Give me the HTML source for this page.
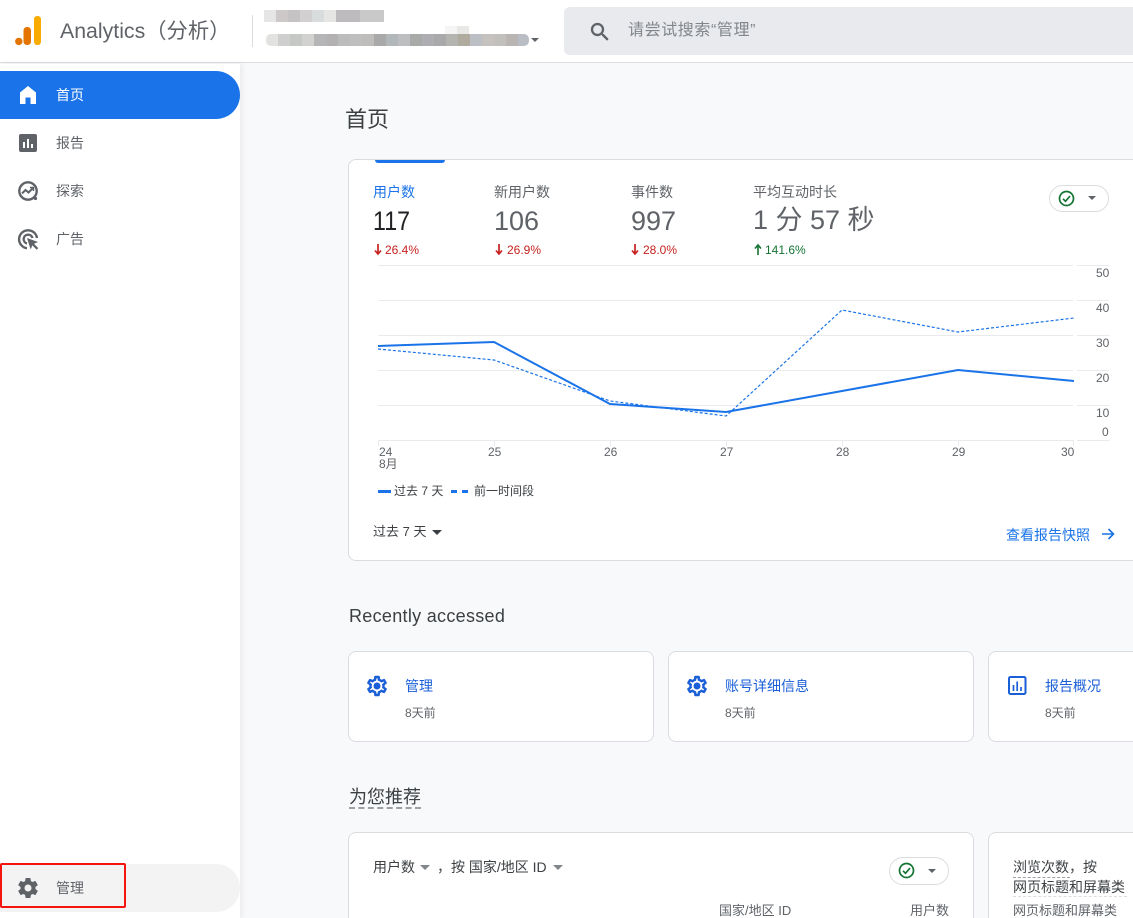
<!DOCTYPE html>
<html lang="zh"><head><meta charset="utf-8"><title>Analytics</title>
<style>
*{box-sizing:border-box}
html,body{margin:0;padding:0;width:1133px;height:918px;overflow:hidden}
body{font-family:"Liberation Sans","Noto Sans CJK SC",sans-serif;color:#5f6368}
#r{position:absolute;left:0;top:0;width:1133px;height:918px;overflow:hidden;background:#f8f9fa}
.a{position:absolute;white-space:nowrap;line-height:1}
.card{position:absolute;background:#fff;border:1px solid #dadce0;border-radius:8px}
.t{font-size:14px}
.red{color:#c5221f;font-size:12px}
.big{font-size:27px;color:#5f6368}
.y{font-size:12px;color:#5f6368;left:1096px}
.x{font-size:12px;color:#5f6368}
.b{position:absolute}
.m{position:absolute;display:flex;height:12px}
.m i{display:block;width:12px;height:12px}
</style></head><body><div id="r">
<!-- header -->
<div class="a" style="left:0;top:0;width:1133px;height:63px;background:#fff;border-bottom:1px solid #dadce0"></div>
<svg class="b" style="left:14px;top:15px" width="28" height="32" viewBox="0 0 28 32">
<rect x="20" y="1" width="7" height="29" rx="3.2" fill="#f9ab00"/>
<rect x="9.500" y="12" width="7.500" height="18" rx="3.400" fill="#e37400"/>
<circle cx="4.800" cy="26.400" r="3.700" fill="#e37400"/>
</svg>
<div class="a" style="left:60px;top:21px;font-size:21.300px;color:#5f6368">Analytics（分析）</div>
<div class="b" style="left:252px;top:15px;width:1px;height:32px;background:#dadce0"></div>
<!-- blurred account -->
<div class="m" style="left:264px;top:10px"><i style="background:#e6e6e6"></i><i style="background:#cdc9c9"></i><i style="background:#c6c3c5"></i><i style="background:#d2d0d0"></i><i style="background:#d8dcdc"></i><i style="background:#e6e6e4"></i><i style="background:#bdbbbe"></i><i style="background:#bdbbbe"></i><i style="background:#c9c9c9"></i><i style="background:#c9c9c9"></i></div>
<div class="b" style="left:445px;top:26px;width:12px;height:8px;background:#f5f5f5"></div>
<div class="b" style="left:457px;top:26px;width:12px;height:8px;background:#e8e8e6"></div>
<div class="m" style="left:266px;top:34px;border-radius:5px;overflow:hidden"><i style="background:#e2e2e0"></i><i style="background:#cfcfcf"></i><i style="background:#c6c8c6"></i><i style="background:#d2d2d0"></i><i style="background:#b5b5b8"></i><i style="background:#b3b1b1"></i><i style="background:#bdbcbc"></i><i style="background:#c0bfbf"></i><i style="background:#bebdbb"></i><i style="background:#a9a9a9"></i><i style="background:#b2b7ba"></i><i style="background:#bcbec0"></i><i style="background:#a8aaa8"></i><i style="background:#aeaeb2"></i><i style="background:#a9a9ab"></i><i style="background:#b4b4b0"></i><i style="background:#b0ab9f"></i><i style="background:#bcbfc4"></i><i style="background:#c5c2bf"></i><i style="background:#c2c0bc"></i><i style="background:#b8b5b2"></i><i style="background:#b9bec4;width:11px"></i></div>
<div class="b" style="left:531px;top:38px;width:0;height:0;border-left:4.500px solid transparent;border-right:4.500px solid transparent;border-top:4.500px solid #5f6368"></div>
<div class="b" style="left:564px;top:7px;width:580px;height:48px;background:#e8eaed;border-radius:6px"></div>
<svg class="b" style="left:588px;top:20px" width="24" height="24" viewBox="0 0 24 24"><path fill="#5f6368" stroke="#5f6368" stroke-width=".4" d="M15.500 14h-.790l-.280-.270A6.470 6.470 0 0 0 16 9.500 6.500 6.500 0 1 0 9.500 16c1.610 0 3.090-.590 4.230-1.570l.270.280v.790l5 4.990L20.490 19l-4.990-5zm-6 0C7.010 14 5 11.990 5 9.500S7.010 5 9.500 5 14 7.010 14 9.500 11.990 14 9.500 14z"/></svg>
<div class="a" style="left:628px;top:23px;font-size:16px;letter-spacing:.6px;color:#80868b">请尝试搜索“管理”</div>

<!-- sidebar -->
<div class="b" style="left:0;top:64px;width:240px;height:854px;background:#fff;box-shadow:2px 0 5px rgba(60,64,67,.08)"></div>
<div class="b" style="left:0;top:71px;width:240px;height:48px;background:#1a73e8;border-radius:0 24px 24px 0"></div>
<svg class="b" style="left:18px;top:85px" width="20" height="20" viewBox="0 0 20 20"><path fill="#fff" d="M10 1 2 7.500V19h5.500v-6.500h5V19H18V7.500z"/></svg>
<div class="a" style="left:56px;top:88px;font-size:14px;color:#fff">首页</div>
<svg class="b" style="left:18px;top:133px" width="20" height="20" viewBox="0 0 20 20"><rect x="1" y="1" width="18" height="18" rx="2" fill="#5f6368"/><path fill="#fff" d="M5 9h2v6H5zM9 6h2v9H9zM13 11h2v4h-2z"/></svg>
<div class="a" style="left:56px;top:136px;font-size:14px;color:#5f6368">报告</div>
<svg class="b" style="left:17px;top:180px" width="22" height="22" viewBox="0 0 22 22" fill="none" stroke="#5f6368"><circle cx="11" cy="11" r="8.700" stroke-width="2.400"/><path d="M5 13.500 8.500 10l3 2.500L16 8" stroke-width="2"/><path d="M13 7.500h3.500V11" stroke-width="1.400"/><circle cx="18.500" cy="18.500" r="1.600" fill="#5f6368" stroke="none"/></svg>
<div class="a" style="left:56px;top:184px;font-size:14px;color:#5f6368">探索</div>
<svg class="b" style="left:17px;top:228px" width="23" height="23" viewBox="0 0 23 23" fill="none" stroke="#5f6368"><path d="M10 20.200A9 9 0 1 1 20 10" stroke-width="2.400"/><path d="M10 15.500A4.500 4.500 0 1 1 15.500 10" stroke-width="2.400"/><path fill="#5f6368" stroke="none" d="M10 10l11 4-4 1.800 4.300 4.300-1.600 1.600-4.300-4.300-1.800 4z"/></svg>
<div class="a" style="left:56px;top:232px;font-size:14px;color:#5f6368">广告</div>
<div class="b" style="left:0;top:864px;width:240px;height:48px;background:#f3f3f3;border-radius:0 24px 24px 0"></div>
<svg class="b" style="left:16px;top:876px" width="24" height="24" viewBox="0 0 24 24"><path fill="#5f6368" d="M19.430 12.980c.040-.320.070-.640.070-.980s-.030-.660-.070-.980l2.110-1.650c.190-.150.240-.420.120-.640l-2-3.460c-.120-.220-.390-.300-.610-.220l-2.490 1c-.520-.400-1.080-.730-1.690-.980l-.380-2.650A.490.490 0 0 0 14 2h-4c-.250 0-.460.180-.49.420l-.38 2.650c-.610.250-1.170.590-1.690.980l-2.490-1c-.230-.090-.490 0-.610.220l-2 3.460c-.130.220-.070.490.120.640l2.110 1.650c-.040.320-.070.650-.070.980s.030.660.070.980l-2.110 1.650c-.190.150-.240.420-.120.640l2 3.460c.120.220.390.300.610.220l2.490-1c.520.400 1.080.730 1.690.980l.380 2.650c.030.240.240.420.490.420h4c.250 0 .460-.180.490-.420l.380-2.650c.610-.250 1.170-.590 1.690-.980l2.490 1c.230.090.490 0 .610-.220l2-3.460c.120-.220.070-.490-.120-.640l-2.110-1.650zM12 15.500A3.500 3.500 0 1 1 12 8.500a3.500 3.500 0 0 1 0 7z"/></svg>
<div class="a" style="left:56px;top:881px;font-size:14px;color:#5f6368">管理</div>
<div class="b" style="left:0;top:863px;width:126px;height:45px;border:2px solid #f5150f;border-radius:2px"></div>

<!-- main -->
<div class="a" style="left:345px;top:109px;font-size:22px;color:#3c4043">首页</div>
<div class="card" style="left:348px;top:159px;width:800px;height:402px"></div>
<div class="b" style="left:375px;top:160px;width:70px;height:3px;background:#1a73e8;border-radius:0 0 3px 3px"></div>

<div class="a t" style="left:373px;top:185px;color:#1a73e8">用户数</div>
<div class="a t" style="left:494px;top:185px">新用户数</div>
<div class="a t" style="left:631px;top:185px">事件数</div>
<div class="a t" style="left:753px;top:185px">平均互动时长</div>
<div class="a big" style="left:373px;top:208px;color:#202124;transform:scaleX(.86);transform-origin:0 0">117</div>
<div class="a big" style="left:494px;top:208px">106</div>
<div class="a big" style="left:631px;top:208px">997</div>
<div class="a big" style="left:753px;top:207px">1 分 57 秒</div>

<svg class="b" style="left:373px;top:243px" width="10" height="13" viewBox="0 0 10 13"><path d="M5 1v10M2 7.500 5 11l3-3.500" fill="none" stroke="#c5221f" stroke-width="1.700"/></svg>
<div class="a red" style="left:385px;top:244px">26.4%</div>
<svg class="b" style="left:494px;top:243px" width="10" height="13" viewBox="0 0 10 13"><path d="M5 1v10M2 7.500 5 11l3-3.500" fill="none" stroke="#c5221f" stroke-width="1.700"/></svg>
<div class="a red" style="left:507px;top:244px">26.9%</div>
<svg class="b" style="left:630px;top:243px" width="10" height="13" viewBox="0 0 10 13"><path d="M5 1v10M2 7.500 5 11l3-3.500" fill="none" stroke="#c5221f" stroke-width="1.700"/></svg>
<div class="a red" style="left:643px;top:244px">28.0%</div>
<svg class="b" style="left:753px;top:243px" width="10" height="13" viewBox="0 0 10 13"><path d="M5 12V2M2 5.500 5 2l3 3.500" fill="none" stroke="#137333" stroke-width="1.600"/></svg>
<div class="a" style="left:765px;top:244px;font-size:12px;color:#137333">141.6%</div>

<div class="b" style="left:1049px;top:185px;width:60px;height:27px;background:#fff;border:1px solid #dadce0;border-radius:14px"></div>
<svg class="b" style="left:1058px;top:190px" width="17" height="17" viewBox="0 0 17 17" fill="none"><circle cx="8.500" cy="8.500" r="7" stroke="#137333" stroke-width="1.700"/><path d="M5 8.800 7.500 11.300 12 6" stroke="#137333" stroke-width="1.700"/></svg>
<div class="b" style="left:1088px;top:196px;width:0;height:0;border-left:4.500px solid transparent;border-right:4.500px solid transparent;border-top:4.500px solid #5f6368"></div>

<!-- chart -->
<svg class="b" style="left:360px;top:255px" width="773" height="200" viewBox="360 255 773 200" fill="none">
<g stroke="#e8eaed" stroke-width="1">
<path d="M378 265.500H1073M1077 265.500H1109M378 300.500H1073M1077 300.500H1109M378 335.500H1073M1077 335.500H1109M378 370.500H1073M1077 370.500H1109M378 405.500H1073M1077 405.500H1109M378 440.500H1073M1077 440.500H1109"/>
<path d="M378.500 440V446M494.500 440V446M610.500 440V446M726.500 440V446M842.500 440V446M958.500 440V446M1073.500 440V446"/>
</g>
<path d="M378 349 494 360 610 401 726 416 842 310 958 332 1074 318" stroke="#1a73e8" stroke-width="1.200" stroke-dasharray="3 2"/>
<path d="M378 346 494 342 610 404 726 412 842 391 958 370 1074 381" stroke="#1a73e8" stroke-width="2"/>
</svg>
<div class="a y" style="top:267px">50</div>
<div class="a y" style="top:302px">40</div>
<div class="a y" style="top:337px">30</div>
<div class="a y" style="top:372px">20</div>
<div class="a y" style="top:407px">10</div>
<div class="a y" style="top:426px;left:1102px">0</div>
<div class="a x" style="left:379px;top:446px">24</div>
<div class="a x" style="left:379px;top:458px">8月</div>
<div class="a x" style="left:488px;top:446px">25</div>
<div class="a x" style="left:604px;top:446px">26</div>
<div class="a x" style="left:720px;top:446px">27</div>
<div class="a x" style="left:836px;top:446px">28</div>
<div class="a x" style="left:952px;top:446px">29</div>
<div class="a x" style="left:1061px;top:446px">30</div>

<div class="b" style="left:378px;top:490px;width:13px;height:3px;background:#1a73e8"></div>
<div class="a" style="left:394px;top:485px;font-size:12px;color:#3c4043">过去 7 天</div>
<div class="b" style="left:451px;top:490px;width:6px;height:3px;background:#1a73e8"></div>
<div class="b" style="left:462px;top:490px;width:6px;height:3px;background:#1a73e8"></div>
<div class="a" style="left:474px;top:485px;font-size:12px;color:#3c4043">前一时间段</div>

<div class="a" style="left:373px;top:525px;font-size:13px;color:#3c4043">过去 7 天</div>
<div class="b" style="left:432px;top:530px;width:0;height:0;border-left:5px solid transparent;border-right:5px solid transparent;border-top:5px solid #3c4043"></div>
<div class="a t" style="left:1006px;top:528px;color:#1a73e8">查看报告快照</div>
<svg class="b" style="left:1101px;top:527px" width="14" height="14" viewBox="0 0 14 14" fill="none"><path d="M1 7h11M7.500 2 12.500 7 7.500 12" stroke="#1a73e8" stroke-width="1.600"/></svg>

<!-- recently accessed -->
<div class="a" style="left:349px;top:607px;font-size:18px;letter-spacing:.3px;color:#3c4043">Recently accessed</div>
<div class="card" style="left:348px;top:651px;width:306px;height:91px"></div>
<div class="card" style="left:668px;top:651px;width:306px;height:91px"></div>
<div class="card" style="left:988px;top:651px;width:306px;height:91px"></div>
<svg class="b" style="left:365px;top:674px" width="24" height="24" viewBox="0 0 24 24"><path fill="#1a5fd8" stroke="#1a5fd8" stroke-width=".5" d="M19.430 12.980c.040-.320.070-.640.070-.980s-.030-.660-.070-.980l2.110-1.650c.190-.150.240-.420.120-.640l-2-3.460c-.120-.220-.390-.300-.610-.220l-2.490 1c-.520-.400-1.080-.730-1.690-.980l-.380-2.650A.490.490 0 0 0 14 2h-4c-.250 0-.460.180-.49.420l-.38 2.650c-.610.250-1.170.590-1.690.980l-2.490-1c-.230-.090-.490 0-.61.220l-2 3.460c-.130.220-.070.490.12.640l2.110 1.650c-.040.320-.070.650-.070.980s.030.660.070.980l-2.110 1.650c-.190.150-.240.420-.12.640l2 3.460c.12.220.39.300.61.220l2.490-1c.52.40 1.08.73 1.69.98l.38 2.650c.03.24.24.42.49.42h4c.25 0 .46-.18.49-.42l.38-2.650c.61-.25 1.17-.59 1.69-.98l2.49 1c.23.09.49 0 .61-.22l2-3.460c.12-.22.07-.49-.12-.64l-2.110-1.650zm-1.980-1.710c.04.310.05.520.05.730s-.02.430-.05.730l-.14 1.130.89.700 1.080.840-.70 1.210-1.270-.51-1.040-.42-.90.680c-.43.320-.84.560-1.250.730l-1.060.43-.16 1.130-.20 1.350h-1.400l-.19-1.350-.16-1.130-1.060-.43c-.43-.18-.83-.41-1.230-.71l-.91-.70-1.060.43-1.270.51-.70-1.210 1.080-.84.89-.70-.14-1.130c-.03-.31-.05-.54-.05-.74s.02-.43.05-.73l.14-1.130-.89-.70-1.08-.84.70-1.210 1.27.51 1.04.42.90-.68c.43-.32.84-.56 1.25-.73l1.060-.43.16-1.130.20-1.350h1.390l.19 1.350.16 1.130 1.060.43c.43.18.83.41 1.230.71l.91.70 1.060-.43 1.270-.51.70 1.210-1.070.85-.89.70.14 1.130z"/><circle cx="12" cy="12" r="3.500" fill="#1a5fd8"/></svg>
<div class="a t" style="left:405px;top:679px;color:#1a5fd8">管理</div>
<div class="a" style="left:405px;top:707px;font-size:12px;color:#5f6368">8天前</div>
<svg class="b" style="left:685px;top:674px" width="24" height="24" viewBox="0 0 24 24"><path fill="#1a5fd8" stroke="#1a5fd8" stroke-width=".5" d="M19.430 12.980c.040-.320.070-.640.070-.980s-.030-.660-.070-.980l2.110-1.650c.190-.150.240-.420.120-.640l-2-3.460c-.120-.220-.390-.300-.610-.220l-2.490 1c-.520-.400-1.080-.730-1.690-.980l-.380-2.650A.490.490 0 0 0 14 2h-4c-.250 0-.460.180-.49.420l-.38 2.650c-.610.250-1.170.590-1.690.980l-2.490-1c-.230-.090-.490 0-.61.220l-2 3.460c-.130.220-.070.490.12.640l2.110 1.650c-.040.320-.070.650-.070.980s.030.660.070.980l-2.110 1.650c-.190.150-.240.420-.12.640l2 3.460c.12.220.39.300.61.220l2.490-1c.52.40 1.08.73 1.69.98l.38 2.650c.03.24.24.42.49.42h4c.25 0 .46-.18.49-.42l.38-2.650c.61-.25 1.17-.59 1.69-.98l2.49 1c.23.09.49 0 .61-.22l2-3.460c.12-.22.07-.49-.12-.64l-2.110-1.650zm-1.980-1.710c.04.310.05.520.05.730s-.02.430-.05.730l-.14 1.130.89.700 1.080.840-.70 1.210-1.270-.51-1.040-.42-.90.680c-.43.320-.84.560-1.250.730l-1.060.43-.16 1.130-.20 1.350h-1.400l-.19-1.350-.16-1.130-1.060-.43c-.43-.18-.83-.41-1.230-.71l-.91-.70-1.060.43-1.270.51-.70-1.210 1.080-.84.89-.70-.14-1.130c-.03-.31-.05-.54-.05-.74s.02-.43.05-.73l.14-1.130-.89-.70-1.08-.84.70-1.210 1.27.51 1.04.42.90-.68c.43-.32.84-.56 1.25-.73l1.060-.43.16-1.130.20-1.350h1.390l.19 1.350.16 1.130 1.060.43c.43.18.83.41 1.230.71l.91.70 1.060-.43 1.270-.51.70 1.210-1.070.85-.89.70.14 1.130z"/><circle cx="12" cy="12" r="3.500" fill="#1a5fd8"/></svg>
<div class="a t" style="left:725px;top:679px;color:#1a5fd8">账号详细信息</div>
<div class="a" style="left:725px;top:707px;font-size:12px;color:#5f6368">8天前</div>
<svg class="b" style="left:1008px;top:676px" width="19" height="20" viewBox="0 0 19 20" fill="none"><rect x="1" y="1" width="16.500" height="17" rx="1.500" stroke="#1a5fd8" stroke-width="2"/><path d="M5.500 9v6M9.200 5.500V15M13 11v4" stroke="#1a5fd8" stroke-width="1.700"/></svg>
<div class="a t" style="left:1045px;top:679px;color:#1a5fd8">报告概况</div>
<div class="a" style="left:1045px;top:707px;font-size:12px;color:#5f6368">8天前</div>

<!-- recommended -->
<div class="a" style="left:349px;top:788px;font-size:18px;color:#3c4043">为您推荐</div>
<div class="b" style="left:349px;top:807px;width:72px;border-top:2px dashed #9aa0a6"></div>
<div class="card" style="left:348px;top:832px;width:626px;height:120px"></div>
<div class="card" style="left:988px;top:832px;width:306px;height:120px"></div>
<div class="a t" style="left:373px;top:860px;color:#3c4043">用户数</div>
<div class="b" style="left:420px;top:865px;width:0;height:0;border-left:5px solid transparent;border-right:5px solid transparent;border-top:5px solid #80868b"></div>
<div class="a t" style="left:437px;top:860px;color:#3c4043">，</div>
<div class="a t" style="left:451px;top:860px;color:#3c4043">按 国家/地区 ID</div>
<div class="b" style="left:553px;top:865px;width:0;height:0;border-left:5px solid transparent;border-right:5px solid transparent;border-top:5px solid #80868b"></div>
<div class="b" style="left:889px;top:857px;width:60px;height:28px;background:#fff;border:1px solid #dadce0;border-radius:14px"></div>
<svg class="b" style="left:898px;top:862px" width="17" height="17" viewBox="0 0 17 17" fill="none"><circle cx="8.500" cy="8.500" r="7" stroke="#137333" stroke-width="1.700"/><path d="M5 8.800 7.500 11.300 12 6" stroke="#137333" stroke-width="1.700"/></svg>
<div class="b" style="left:928px;top:869px;width:0;height:0;border-left:4.500px solid transparent;border-right:4.500px solid transparent;border-top:4.500px solid #5f6368"></div>
<div class="a" style="left:719px;top:904px;font-size:13px;color:#5f6368">国家/地区 ID</div>
<div class="a" style="left:910px;top:904px;font-size:13px;color:#5f6368">用户数</div>
<div class="a t" style="left:1013px;top:860px;color:#3c4043">浏览次数，按</div>
<div class="b" style="left:1013px;top:877px;width:57px;border-top:1px dashed #9aa0a6"></div>
<div class="a t" style="left:1013px;top:880px;color:#3c4043">网页标题和屏幕类</div>
<div class="b" style="left:1013px;top:896px;width:114px;border-top:1px dashed #dadce0"></div>
<div class="a" style="left:1013px;top:904px;font-size:13px;color:#5f6368">网页标题和屏幕类</div>
</div></body></html>
